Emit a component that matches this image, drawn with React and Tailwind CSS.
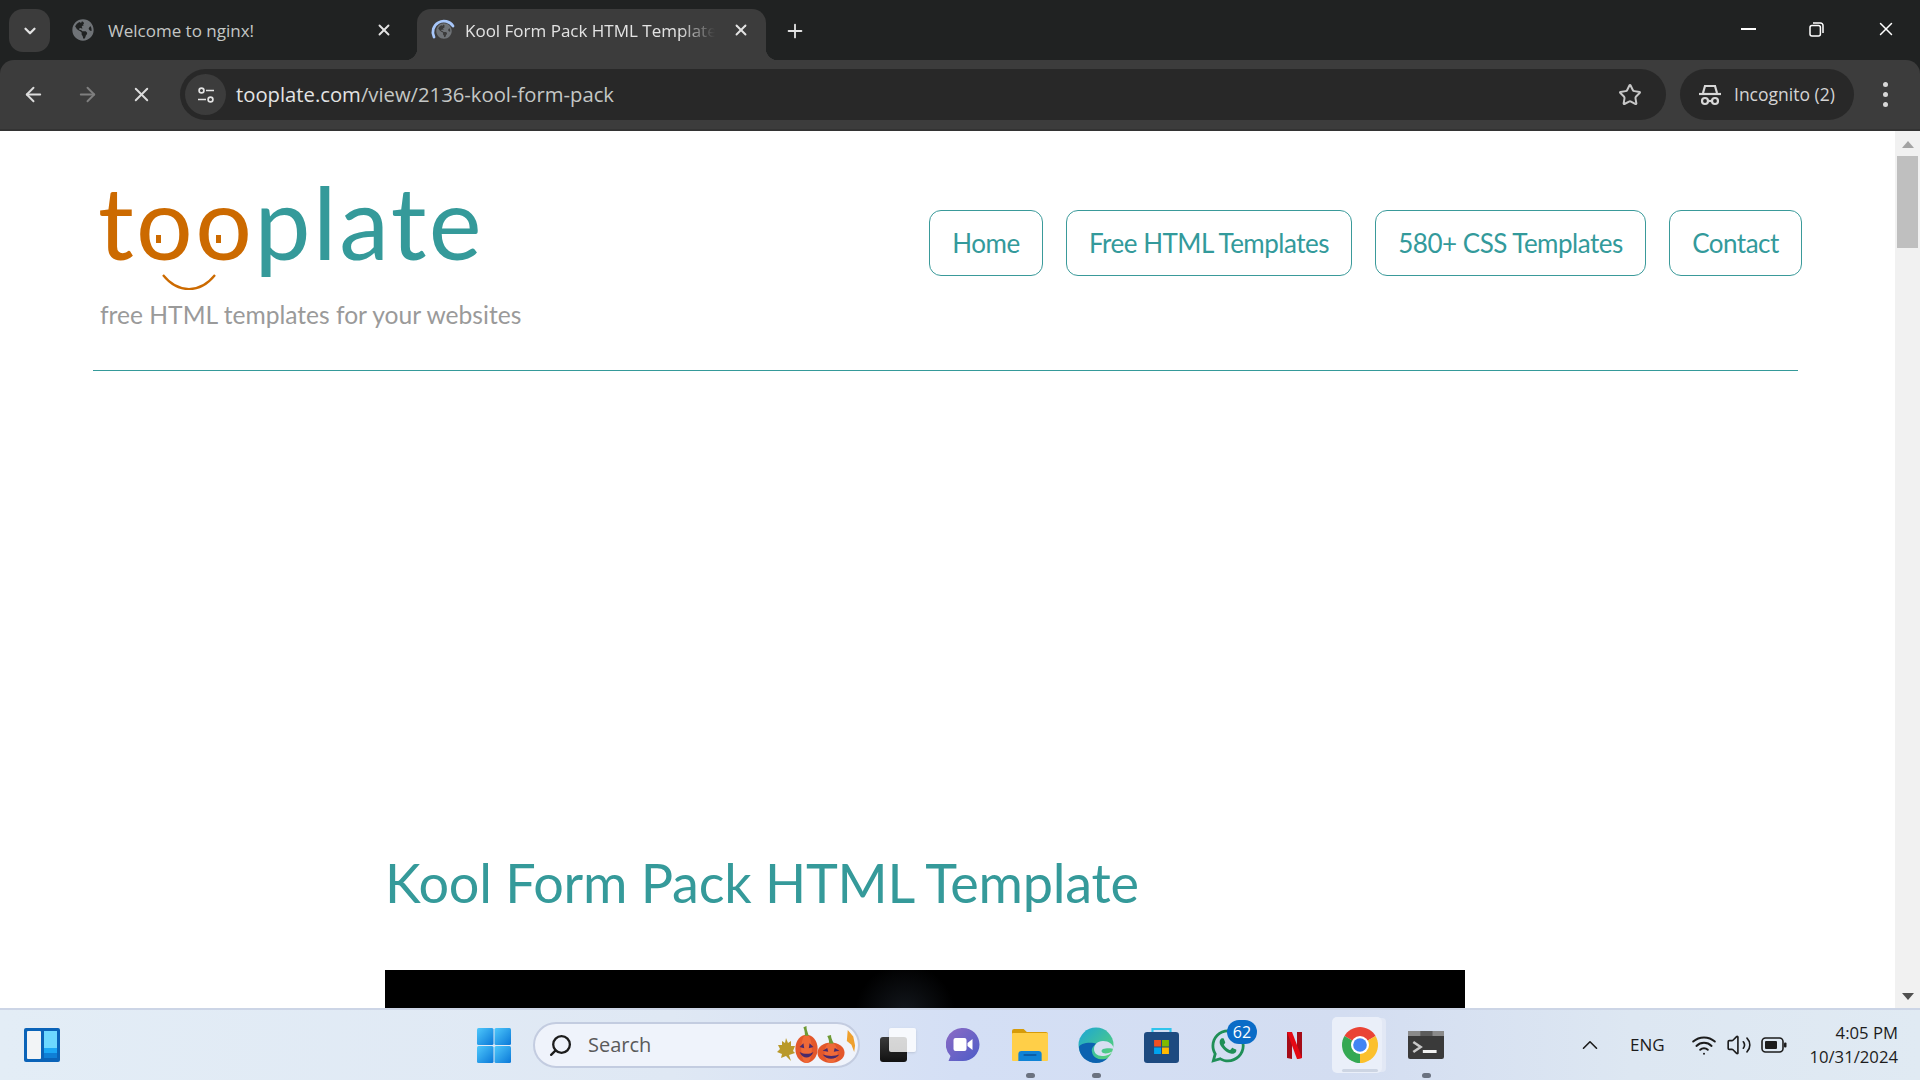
import { ArrowLeft, ArrowRight, X, Plus, ChevronDown, ChevronUp, Star, Wifi, Volume2, Search } from 'lucide-react'
import { FaGlobeAmericas, FaWhatsapp } from 'react-icons/fa'

const chromeFont = "font-['Open_Sans',sans-serif]"
const siteFont = "font-['Lato',sans-serif]"

function NavButton({ label, className }) {
  return (
    <a className={`flex h-[66px] items-center justify-center rounded-[12px] border border-[#3a9a9a] text-[26px] tracking-[-0.5px] text-[#339a9b] ${className}`}>
      {label}
    </a>
  )
}

function TabBar() {
  return (
    <div className={`flex h-[60px] shrink-0 bg-[#202222] text-[17px] ${chromeFont}`}>
      <button className="ml-[9px] mt-[9px] flex h-[43px] w-[41px] items-center justify-center rounded-[14px] bg-[#3c3c3c] text-[#e3e3e3]">
        <ChevronDown size={18} strokeWidth={3} />
      </button>
      <div className="ml-[22px] flex h-[60px] w-[322px] items-center text-[#c4c7c5]">
        <FaGlobeAmericas size={22} className="text-[#6f7377]" />
        <span className="ml-[14px] mt-[2px] flex-1">Welcome to nginx!</span>
        <X size={18} strokeWidth={2.5} className="mr-[1px] text-[#e3e3e3]" />
      </div>
      <div className="relative ml-[23px] mt-[9px] flex h-[51px] w-[349px] items-center rounded-t-[14px] bg-[#3c3c3c] pb-[10px] text-[#e3e3e3]">
        <span className="absolute -left-[12px] bottom-0 h-[12px] w-[12px] bg-[radial-gradient(circle_at_0_0,transparent_12px,#3c3c3c_12.5px)]" />
        <span className="absolute -right-[12px] bottom-0 h-[12px] w-[12px] bg-[radial-gradient(circle_at_100%_0,transparent_12px,#3c3c3c_12.5px)]" />
        <div className="relative ml-[13px] mr-[9px] h-[26px] w-[26px]">
          <FaGlobeAmericas size={16} className="absolute left-[6px] top-[6px] text-[#6f7377]" />
          <svg viewBox="0 0 26 26" className="absolute inset-0" fill="none">
            <path d="M4 20A11 11 0 0 1 23 9" stroke="#a8c7fa" strokeWidth="2.8" strokeLinecap="round" />
          </svg>
        </div>
        <span className="mt-[2px] w-[250px] overflow-hidden whitespace-nowrap [mask-image:linear-gradient(90deg,#000_86%,transparent)]">
          Kool Form Pack HTML Template
        </span>
        <X size={18} strokeWidth={2.5} className="ml-[17px]" />
      </div>
      <Plus size={22} strokeWidth={2} className="ml-[18px] mt-[20px] text-[#e3e3e3]" />
      <div className="ml-auto mr-[23px] flex items-center gap-[53px] pb-[2px] text-white">
        <span className="h-[2px] w-[15px] bg-white" />
        <svg width="15" height="15" viewBox="0 0 15 15" fill="none" stroke="#fff" strokeWidth="1.5">
          <rect x="1" y="3.6" width="10.4" height="10.4" rx="2" />
          <path d="M4 1h7.5A2.5 2.5 0 0 1 14 3.5V11" />
        </svg>
        <X size={22} strokeWidth={1.6} className="-ml-[2px]" />
      </div>
    </div>
  )
}

function Toolbar() {
  return (
    <div className="h-[71px] shrink-0 bg-[#202222]">
      <div className={`flex h-[71px] items-center rounded-t-[14px] border-b-2 border-[#333333] bg-[#3c3c3c] ${chromeFont}`}>
        <ArrowLeft size={23} strokeWidth={2} className="ml-[22px] text-[#dcdcdc]" />
        <ArrowRight size={23} strokeWidth={2} className="ml-[31px] text-[#7f7f7f]" />
        <X size={23} strokeWidth={2} className="ml-[31px] text-[#dcdcdc]" />
        <div className="ml-[27px] flex h-[51px] w-[1486px] items-center rounded-full bg-[#282828]">
          <div className="ml-[5px] flex h-[41px] w-[41px] items-center justify-center rounded-full bg-[#3c3c3c]">
            <svg width="20" height="20" viewBox="0 0 20 20" fill="none" stroke="#e3e3e3" strokeWidth="1.7">
              <circle cx="5.5" cy="5.5" r="2.4" />
              <path d="M10 5.5h8M2 14.5h8" />
              <circle cx="14.5" cy="14.5" r="2.4" />
            </svg>
          </div>
          <span className="ml-[10px] text-[20.25px] text-[#e3e3e3]">
            tooplate.com<span className="text-[#c4c7c5]">/view/2136-kool-form-pack</span>
          </span>
          <Star size={24} strokeWidth={2} className="ml-auto mr-[24px] text-[#c7c7c7]" />
        </div>
        <div className="ml-[14px] flex h-[51px] w-[174px] items-center rounded-full bg-[#282828] text-[17.5px] text-[#d4d4d4]">
          <svg width="24" height="22" viewBox="0 0 24 22" fill="none" stroke="#d8d8d8" strokeWidth="2.2" className="ml-[18px]">
            <path d="M5 9l2-7h10l2 7" />
            <path d="M1 10h22" />
            <circle cx="7" cy="17" r="3" />
            <circle cx="17" cy="17" r="3" />
            <path d="M10 17h4" />
          </svg>
          <span className="ml-[12px]">Incognito (2)</span>
        </div>
        <div className="ml-[29px] flex flex-col gap-[5px]">
          <span className="h-[5px] w-[5px] rounded-full bg-[#d8d8d8]" />
          <span className="h-[5px] w-[5px] rounded-full bg-[#d8d8d8]" />
          <span className="h-[5px] w-[5px] rounded-full bg-[#d8d8d8]" />
        </div>
      </div>
    </div>
  )
}

function Logo() {
  return (
    <div className="relative ml-[5px] mt-[36px] w-[430px]">
      <div className="h-[108px] whitespace-nowrap text-[100px] leading-[108px] tracking-[2.5px]">
        <span className="text-[#cc6a00]">too</span>
        <span className="text-[#359a9a]">plate</span>
      </div>
      <span className="absolute left-[58px] top-[68px] h-[8px] w-[5px] bg-[#cc6a00]" />
      <span className="absolute left-[118px] top-[68px] h-[8px] w-[5px] bg-[#cc6a00]" />
      <svg width="56" height="18" viewBox="0 0 56 18" fill="none" className="absolute left-[63px] top-[106px]">
        <path d="M2 2C10 12 18 16 28 16S46 12 54 2" stroke="#cc6a00" strokeWidth="2.2" />
      </svg>
      <p className="ml-[2px] mt-[25px] text-[24.6px] leading-[30px] text-[#9a9a9a]">free HTML templates for your websites</p>
    </div>
  )
}

function Page() {
  return (
    <div className={`min-w-0 flex-1 overflow-hidden bg-white ${siteFont}`}>
      <header className="ml-[93px] flex h-[240px] w-[1705px] justify-between border-b border-[#359a9a]">
        <Logo />
        <nav className="-mr-[4px] mt-[79px] flex gap-[23px]">
          <NavButton label="Home" className="w-[114px]" />
          <NavButton label="Free HTML Templates" className="w-[286px]" />
          <NavButton label="580+ CSS Templates" className="w-[271px]" />
          <NavButton label="Contact" className="w-[133px]" />
        </nav>
      </header>
      <h1 className="ml-[385px] mt-[482px] h-[60px] text-[54px] leading-[60px] tracking-[-0.25px] text-[#359a9a]">Kool Form Pack HTML Template</h1>
      <div className="ml-[385px] mt-[57px] h-[300px] w-[1080px] bg-[radial-gradient(circle_at_520px_44px,#14181e_0,#000_50px)]" />
    </div>
  )
}

function Scrollbar() {
  return (
    <div className="flex w-[25px] shrink-0 flex-col items-center bg-[#f1f1f1]">
      <span className="mt-[10px] h-0 w-0 border-x-[6px] border-b-[7px] border-x-transparent border-b-[#a3a3a3]" />
      <span className="mt-[8px] h-[92px] w-[21px] bg-[#bfbfbf]" />
      <span className="mt-auto mb-[8px] h-0 w-0 border-x-[6px] border-t-[7px] border-x-transparent border-t-[#505050]" />
    </div>
  )
}

function Pumpkin({ w, h, stem }) {
  return (
    <svg width={w} height={h} viewBox="0 0 30 30" preserveAspectRatio="none">
      <ellipse cx="15" cy={(30 + stem) / 2} rx="14.5" ry={(30 - stem) / 2} fill="#e3572b" />
      <ellipse cx="15" cy={(30 + stem) / 2} rx="7" ry={(30 - stem) / 2} fill="#ef6a38" />
      <path d={`M13 ${stem + 1}C13 ${stem - 3} 12 3 11 1l4-1c0 3 1 ${stem - 3} 3 ${stem + 1}z`} fill="#6f9a35" />
      <path d="M6 17l5-3 1 4zM24 17l-5-3-1 4z" fill="#4a2a6a" />
      <path d="M6 21c4 6 14 6 18 0-5 2-12 2-18 0z" fill="#4a2a6a" />
    </svg>
  )
}

function TaskIcon({ children, className = '', dot }) {
  return (
    <div className={`relative flex h-[70px] items-center justify-center ${className}`}>
      {children}
      {dot && <span className="absolute bottom-[2px] h-[5px] w-[9px] rounded-full bg-[#6b7280]" />}
    </div>
  )
}

function Taskbar() {
  return (
    <div className={`relative flex h-[72px] shrink-0 items-center border-t-2 border-[#ccd5e6] bg-[linear-gradient(90deg,#e3edf6_0%,#dfe8f4_35%,#d4dff5_50%,#d3ddf1_70%,#dde7f2_85%,#e0eaf3_100%)] ${chromeFont}`}>
      {/* widgets */}
      <svg width="36" height="34" viewBox="0 0 36 34" className="ml-[24px] shrink-0">
        <rect width="36" height="34" rx="2" fill="#0a63b8" />
        <rect x="3" y="3" width="14" height="28" rx="1" fill="#f2f4f6" />
        <rect x="20" y="3" width="13" height="17" fill="#6dd8ff" />
        <rect x="20" y="20" width="13" height="5" fill="#1ba7f5" />
        <rect x="20" y="25" width="13" height="5" fill="#0f7fd6" />
      </svg>

      {/* start */}
      <svg width="34" height="35" viewBox="0 0 34 35" className="ml-[417px] shrink-0">
        <defs>
          <linearGradient id="win" x1="0" y1="0" x2="1" y2="1">
            <stop offset="0" stopColor="#4fc8fb" />
            <stop offset="1" stopColor="#0a78d8" />
          </linearGradient>
        </defs>
        <rect x="0" y="0" width="16.5" height="17" rx="1.5" fill="url(#win)" />
        <rect x="17.5" y="0" width="16.5" height="17" rx="1.5" fill="url(#win)" />
        <rect x="0" y="18" width="16.5" height="17" rx="1.5" fill="url(#win)" />
        <rect x="17.5" y="18" width="16.5" height="17" rx="1.5" fill="url(#win)" />
      </svg>

      {/* search */}
      <div className="relative ml-[22px] flex h-[46px] w-[327px] shrink-0 items-center rounded-full border-2 border-[#c3cce0] bg-[#eff3fb]">
        <Search size={25} strokeWidth={2.2} className="ml-[13px] -scale-x-100 text-[#1c1c1c]" />
        <span className="ml-[15px] text-[20px] text-[#5a5a5a]">Search</span>
        <div className="absolute bottom-[3px] right-[2px] flex items-end">
          <svg width="18" height="23" viewBox="0 0 18 23" className="mb-[2px]">
            <path d="M9 0l2 5 3-2 0 5 4 0-2 5 2 2-6 2 2 6-5-5-5 2 1-4-5-2 3-3-2-4 4 0 0-4 3 2z" fill="#b9992a" />
          </svg>
          <Pumpkin w={23} h={37} stem={7} />
          <div className="-ml-[1px]">
            <Pumpkin w={28} h={28} stem={8} />
          </div>
          <svg width="11" height="22" viewBox="0 0 10 24" className="mb-[11px]">
            <path d="M2 0l6 7 2 10-1 7-3-8-5-4z" fill="#eea02e" />
          </svg>
        </div>
      </div>

      {/* task view */}
      <div className="relative ml-[20px] h-[34px] w-[36px] shrink-0">
        <span className="absolute bottom-0 left-0 h-[25px] w-[27px] rounded-[3px] bg-[linear-gradient(180deg,#3a3a3a,#111)]" />
        <span className="absolute right-0 top-0 h-[24px] w-[27px] rounded-[2px] bg-white/80 shadow-sm" />
      </div>

      {/* chat */}
      <svg width="34" height="35" viewBox="0 0 33 35" className="ml-[30px] shrink-0">
        <defs>
          <linearGradient id="chat" x1="0" y1="0" x2="1" y2="1">
            <stop offset="0" stopColor="#8d6bc4" />
            <stop offset="1" stopColor="#4c5cc8" />
          </linearGradient>
        </defs>
        <path d="M16.5 0a16.5 16.5 0 0 1 0 33H2l2-5A16.5 16.5 0 0 1 16.5 0z" fill="url(#chat)" />
        <rect x="7" y="10" width="13" height="13" rx="2" fill="#fff" />
        <path d="M21 15l5-4v11l-5-4z" fill="#fff" />
      </svg>

      {/* explorer */}
      <TaskIcon className="ml-[32px] w-[36px] shrink-0" dot>
        <svg width="36" height="32" viewBox="0 0 34 32" preserveAspectRatio="none">
          <path d="M0 2a2 2 0 0 1 2-2h9l3 3h18a2 2 0 0 1 2 2v3H0z" fill="#d69b09" />
          <rect y="4" width="34" height="28" rx="1" fill="#ffcf48" />
          <path d="M6 32v-7a3 3 0 0 1 3-3h16a3 3 0 0 1 3 3v7z" fill="#0f83d6" />
          <rect x="11" y="25" width="12" height="2" fill="#0a5ea8" />
        </svg>
      </TaskIcon>

      {/* edge */}
      <TaskIcon className="ml-[30px] w-[36px] shrink-0" dot>
        <svg width="36" height="36" viewBox="0 0 36 36">
          <defs>
            <linearGradient id="edgeTop" x1="0" y1="0" x2="1" y2="1">
              <stop offset="0" stopColor="#1aa5d8" />
              <stop offset="1" stopColor="#5ed66c" />
            </linearGradient>
          </defs>
          <circle cx="18" cy="18" r="17.5" fill="url(#edgeTop)" />
          <path d="M1 20C1 29 9 36 18 36c5 0 9-2 12-5-6 3-15 1-16-6-1-4 2-7 5-8-7-3-18 0-18 3z" fill="#0c62b0" />
          <path d="M36 22c-1-5-5-8-11-8-6 0-9 4-9 8 0 4 3 7 8 7 5 0 9-2 11-5-3 2-7 3-10 2-2-1-2-3 0-4 3-1 8-1 11 0z" fill="#d7dff2" />
        </svg>
      </TaskIcon>

      {/* store */}
      <svg width="35" height="36" viewBox="0 0 33 36" preserveAspectRatio="none" className="ml-[30px] shrink-0">
        <path d="M8 6V2h17v4" fill="none" stroke="#2fc4ec" strokeWidth="2" />
        <rect y="5" width="33" height="31" rx="3" fill="#1d4a80" />
        <rect x="9.5" y="13" width="6.5" height="6.5" fill="#f25022" />
        <rect x="17" y="13" width="6.5" height="6.5" fill="#7fba00" />
        <rect x="9.5" y="20.5" width="6.5" height="6.5" fill="#00a4ef" />
        <rect x="17" y="20.5" width="6.5" height="6.5" fill="#ffb900" />
      </svg>

      {/* whatsapp */}
      <TaskIcon className="ml-[31px] w-[36px] shrink-0">
        <FaWhatsapp size={38} className="mt-[2px] text-[#1f8f57]" />
        <span className="absolute -right-[11px] top-[10px] flex h-[24px] w-[30px] items-center justify-center rounded-full bg-[#0a6cc7] text-[16px] text-white">62</span>
      </TaskIcon>

      {/* netflix */}
      <svg width="15" height="27" viewBox="0 0 15 27" className="ml-[41px] shrink-0">
        <path d="M0 0h5v27l-5-1z" fill="#a50c18" />
        <path d="M10 0h5v26l-5 1z" fill="#a50c18" />
        <path d="M0 0h5l10 26-5 1z" fill="#e50914" />
      </svg>

      {/* chrome */}
      <div className="relative ml-[30px] flex h-[56px] w-[50px] shrink-0 items-center justify-center rounded-[5px] bg-[#eaeff9] pl-[6px] shadow-[5px_0_0_-1px_#e2e8f5]">
        <svg width="36" height="36" viewBox="0 0 40 40">
          <path d="M20 20L2.7 10A20 20 0 0 1 37.3 10z" fill="#ea4335" />
          <path d="M20 20L37.3 10A20 20 0 0 1 20 40z" fill="#fbc02d" />
          <path d="M20 20L20 40A20 20 0 0 1 2.7 10z" fill="#34a853" />
          <circle cx="20" cy="20" r="10" fill="#fff" />
          <circle cx="20" cy="20" r="7.6" fill="#4285f4" />
        </svg>
        <span className="absolute bottom-[1px] left-[10px] h-[3px] w-[36px] rounded-full bg-[#cdd5e3]" />
      </div>

      {/* terminal */}
      <TaskIcon className="ml-[26px] w-[36px] shrink-0" dot>
        <svg width="36" height="28" viewBox="0 0 34 28" preserveAspectRatio="none">
          <rect width="34" height="28" rx="2" fill="#3a3a3a" />
          <rect width="12" height="5" fill="#8a8a8a" />
          <rect x="12" width="11" height="5" fill="#5c5c5c" />
          <rect x="23" width="11" height="5" fill="#8a8a8a" />
          <path d="M5 11l7 5-7 5" fill="none" stroke="#c8c8c8" strokeWidth="2.4" />
          <rect x="14" y="19" width="13" height="3" fill="#f0f0f0" />
        </svg>
      </TaskIcon>

      {/* tray */}
      <ChevronUp size={26} strokeWidth={1.5} className="ml-[133px] shrink-0 text-[#1c1c1c]" />
      <span className="ml-[27px] shrink-0 text-[17px] text-[#1c1c1c]">ENG</span>
      <Wifi size={26} strokeWidth={1.8} className="ml-[26px] shrink-0 text-[#1c1c1c]" />
      <Volume2 size={26} strokeWidth={1.5} className="ml-[9px] shrink-0 text-[#1c1c1c]" />
      <svg width="26" height="16" viewBox="0 0 26 16" fill="none" className="ml-[9px] shrink-0">
        <rect x="1" y="1" width="21" height="14" rx="3.5" stroke="#1c1c1c" strokeWidth="1.6" />
        <rect x="4" y="4" width="12" height="8" rx="1" fill="#1c1c1c" />
        <rect x="23" y="5.5" width="2.5" height="5" rx="1" fill="#1c1c1c" />
      </svg>
      <div className="ml-auto mr-[22px] shrink-0 text-right text-[16.7px] leading-[24px] text-[#1c1c1c]">
        <div>4:05 PM</div>
        <div>10/31/2024</div>
      </div>
    </div>
  )
}

export default function App() {
  return (
    <div className="flex h-screen w-full flex-col overflow-hidden bg-white">
      <TabBar />
      <Toolbar />
      <div className="flex min-h-0 flex-1">
        <Page />
        <Scrollbar />
      </div>
      <Taskbar />
    </div>
  )
}
